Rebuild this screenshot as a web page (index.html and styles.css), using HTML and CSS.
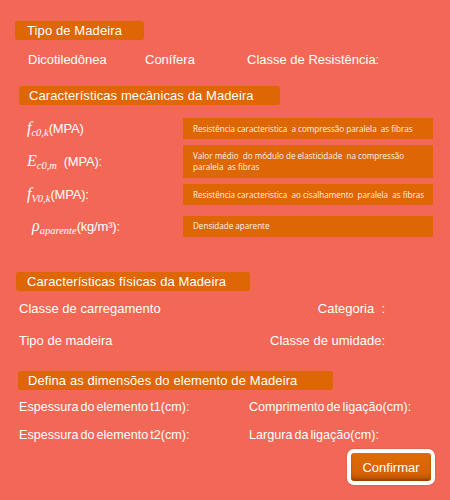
FILE: index.html
```html
<!DOCTYPE html>
<html lang="pt">
<head>
<meta charset="utf-8">
<link rel="stylesheet" href="styles.css">
</head>
<body>
<main class="page">
  <section class="sec sec-tipo">
    <div class="head head-tipo">Tipo de Madeira</div>
    <div class="row-tipo">
      <span>Dicotiledônea</span>
      <span>Conífera</span>
      <span>Classe de Resistência:</span>
    </div>
  </section>

  <section class="sec sec-mec">
    <div class="head head-mec">Características mecânicas da Madeira</div>
    <div class="mec-grid">
      <div class="mlabel"><span class="m">f<sub>c0,k</sub></span>(MPA)</div>
      <div class="mbox">Resistência caracteristica&nbsp; a compressão paralela&nbsp; as fibras</div>

      <div class="mlabel"><span class="m">E<sub>c0,m</sub></span>&nbsp; (MPA):</div>
      <div class="mbox tall">Valor médio&nbsp; do módulo de elasticidade&nbsp; na compressão paralela&nbsp; as fibras</div>

      <div class="mlabel"><span class="m">f<sub>V0,k</sub></span>(MPA):</div>
      <div class="mbox">Resistência caracteristica&nbsp; ao cisalhamento&nbsp; paralela&nbsp; as fibras</div>

      <div class="mlabel rho"><span class="m">ρ<sub>aparente</sub></span>(kg/m³):</div>
      <div class="mbox last">Densidade aparente</div>
    </div>
  </section>

  <section class="sec sec-fis">
    <div class="head head-fis">Características físicas da Madeira</div>
    <div class="fis-grid">
      <span>Classe de carregamento</span>
      <span class="r">Categoria&nbsp; :</span>
      <span>Tipo de madeira</span>
      <span class="r">Classe de umidade:</span>
    </div>
  </section>

  <section class="sec sec-dim">
    <div class="head head-dim">Defina as dimensões do elemento de Madeira</div>
    <div class="dim-grid">
      <span>Espessura do elemento t1(cm):</span>
      <span>Comprimento de ligação(cm):</span>
      <span>Espessura do elemento t2(cm):</span>
      <span>Largura da ligação(cm):</span>
    </div>
    <div class="actions">
      <button class="btn" type="button">Confirmar</button>
    </div>
  </section>
</main>
</body>
</html>
```

FILE: styles.css
```css
* { box-sizing: border-box; }
html, body { margin: 0; padding: 0; }
body {
  background: #f26756;
  width: 450px;
  height: 500px;
  overflow: hidden;
  font-family: "Liberation Sans", Arial, sans-serif;
  color: #fff;
}
.page {
  display: flex;
  flex-direction: column;
  padding-top: 21px;
}
.head {
  background: #de6604;
  border-radius: 3px;
  height: 19px;
  line-height: 19px;
  font-size: 13px;
  color: #fff;
  white-space: nowrap;
}
.head-tipo { margin-left: 15px; width: 129px; padding-left: 12px; letter-spacing: 0.1px; }
.head-mec { margin-left: 19px; width: 261px; padding-left: 10px; letter-spacing: 0.1px; }
.head-fis { margin-left: 16px; width: 234px; padding-left: 11px; letter-spacing: 0.1px; }
.head-dim { margin-left: 18px; width: 315px; padding-left: 10px; letter-spacing: 0.1px; }

.row-tipo {
  display: grid;
  grid-template-columns: 117px 102px auto;
  padding-left: 28px;
  margin-top: 12px;
  font-size: 13px;
  line-height: 15px;
}

.sec-mec { margin-top: 19px; }
.mec-grid {
  display: grid;
  grid-template-columns: 156px 250px;
  padding-left: 27px;
  margin-top: 13px;
  row-gap: 6px;
  align-items: center;
}
.mlabel {
  font-size: 13px;
  white-space: nowrap;
  line-height: 18px;
  letter-spacing: -0.2px;
}
.mlabel.rho { padding-left: 5px; margin-top: 5px; }
.m {
  font-family: "Liberation Serif", "Times New Roman", serif;
  font-style: italic;
  font-size: 16px;
  letter-spacing: 0;
}
.m sub {
  font-size: 10.5px;
  vertical-align: -3px;
  line-height: 0;
}
.mbox {
  background: #de6604;
  font-family: "Open Sans", "Noto Sans", sans-serif;
  font-size: 8.1px;
  line-height: 11px;
  padding: 5px 10px 5px 10px;
  min-height: 21px;
  color: #fff4ea;
  white-space: nowrap;
}
.mbox.tall { height: 33px; white-space: normal; padding-right: 20px; }
.mbox.last { margin-top: 5px; padding-top: 4px; }

.sec-fis { margin-top: 35px; }
.fis-grid {
  display: grid;
  grid-template-columns: 1fr 1fr;
  padding-left: 19px;
  padding-right: 65px;
  margin-top: 10px;
  font-size: 13px;
  line-height: 16px;
  row-gap: 16px;
}
.fis-grid .r { justify-self: end; }

.sec-dim { margin-top: 22px; }
.dim-grid {
  display: grid;
  grid-template-columns: 230px auto;
  padding-left: 19px;
  margin-top: 9px;
  font-size: 12.6px;
  line-height: 16px;
  row-gap: 12px;
  word-spacing: -1.5px;
}

.actions {
  display: flex;
  justify-content: flex-end;
  padding-right: 15px;
  margin-top: 6px;
}
.btn {
  width: 88px;
  height: 36px;
  border: 4px solid #fff;
  border-radius: 7px;
  background: linear-gradient(#e06b08, #d86204 70%, #b85200);
  box-shadow: inset 0 -2px 2px rgba(120, 50, 0, 0.5), 0 0 2px rgba(0,0,0,0.2);
  color: #fff;
  font-family: "Liberation Sans", Arial, sans-serif;
  font-size: 13px;
  padding: 0;
  cursor: pointer;
}
```
